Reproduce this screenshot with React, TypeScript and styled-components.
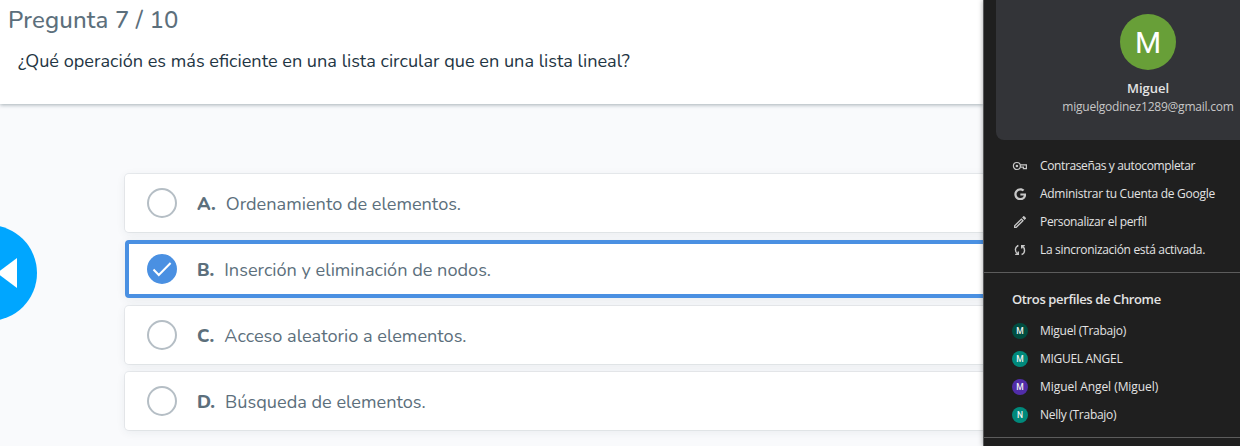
import React from "react";
import styled, { createGlobalStyle } from "styled-components";
import { MdOutlineEdit } from "react-icons/md";
import { FaGoogle } from "react-icons/fa";

const GlobalStyle = createGlobalStyle`
  * { box-sizing: border-box; }
  body { margin: 0; background: #f9fafc; overflow: hidden; }
`;

const Screen = styled.div`
  display: flex;
  width: 1240px;
  height: 446px;
  overflow: hidden;
  background: #f9fafc;
`;

const Quiz = styled.main`
  flex: 0 0 983px;
  min-width: 0;
  height: 100%;
  overflow: hidden;
  font-family: Nunito, Lato, sans-serif;
  color: #5c6f7c;
`;

const Header = styled.header`
  height: 104px;
  padding: 3px 8px 0;
  background: #fff;
  box-shadow: 0 1px 4px rgba(38, 62, 76, 0.4);
`;

const Progress = styled.h1`
  margin: 0;
  font-size: 24px;
  font-weight: 500;
  line-height: 34px;
  letter-spacing: 0.15px;
`;

const Question = styled.p`
  margin: 12px 0 0 10px;
  font-size: 18.15px;
  line-height: 24px;
  color: #1f3644;
`;

const Body = styled.div`
  display: flex;
  align-items: flex-start;
  padding-top: 70px;
`;

const PrevButton = styled.button`
  flex: none;
  display: flex;
  align-items: center;
  width: 96px;
  height: 96px;
  margin: 51px 88px 0 -59px;
  padding: 0 0 0 58px;
  border: 0;
  border-radius: 50%;
  background: #00a6ff;
`;

const Answers = styled.div`
  flex: none;
  display: flex;
  flex-direction: column;
  gap: 8px;
  width: 990px;
`;

const Answer = styled.div<{ $selected?: boolean }>`
  display: flex;
  align-items: center;
  height: 58px;
  padding-left: ${(p) => (p.$selected ? 18 : 22)}px;
  border-radius: 4px;
  background: #fff;
  border: ${(p) => (p.$selected ? "4px solid #4a90e2" : "0")};
  box-shadow: ${(p) => (p.$selected ? "" : "0 0 0 1px rgba(38, 62, 76, 0.07), ")}0 2px 10px rgba(38, 62, 76, 0.08);
  font-size: 18.15px;
  line-height: 24px;
`;

const Radio = styled.span<{ $selected?: boolean }>`
  display: flex;
  align-items: center;
  justify-content: center;
  width: 30px;
  height: 30px;
  border-radius: 50%;
  border: ${(p) => (p.$selected ? "0" : "2px solid #b5bec5")};
  background: ${(p) => (p.$selected ? "#4a90e2" : "#fff")};
`;

const Letter = styled.b`
  margin: 2px 10px 0 20px;
  font-weight: 800;
`;

const AnswerText = styled.span`
  margin-top: 2px;
`;

const Panel = styled.aside`
  position: relative;
  flex: 1;
  min-width: 0;
  height: 446px;
  overflow: hidden;
  border-left: 1px solid #58595b;
  background: #1f1f1f;
  box-shadow: 0 0 5px rgba(0, 0, 0, 0.35);
  font-family: "Open Sans", sans-serif;
  font-size: 12px;
  color: #e3e3e3;
`;

const ProfileCard = styled.div`
  display: flex;
  flex-direction: column;
  align-items: center;
  width: 304px;
  height: 140px;
  margin-left: 12px;
  padding-top: 14px;
  border-radius: 0 0 8px 8px;
  background: #333438;
`;

const Avatar = styled.span`
  display: flex;
  align-items: center;
  justify-content: center;
  width: 56px;
  height: 56px;
  padding-top: 1px;
  border-radius: 50%;
  background: #689f38;
  color: #fff;
  font: 400 30px/55px Roboto, sans-serif;
`;

const Name = styled.strong`
  margin-top: 9px;
  font-size: 13px;
  line-height: 18px;
  font-weight: 600;
`;

const Email = styled.span`
  margin-top: 1px;
  line-height: 18px;
  letter-spacing: -0.22px;
  color: #c7c7c7;
`;

const List = styled.ul`
  margin: 0;
  padding: 12px 0 8px 28px;
  list-style: none;
  border-bottom: 1px solid #5c5c5c;
`;

const ProfileList = styled(List)`
  padding: 8px 0;
  padding-left: 28px;
`;

const Item = styled.li<{ $spacing: number }>`
  display: flex;
  align-items: center;
  gap: 12px;
  height: 28px;
  white-space: nowrap;
  letter-spacing: ${(p) => p.$spacing}px;
`;

const ItemText = styled.span`
  padding-bottom: 2px;
`;

const IconSlot = styled.span`
  display: flex;
  align-items: center;
  justify-content: center;
  width: 16px;
  height: 16px;
  color: #c7c7c7;
`;

const Heading = styled.h2`
  margin: 16px 0 0 28px;
  font-size: 13px;
  line-height: 20px;
  font-weight: 600;
  letter-spacing: -0.38px;
`;

const Badge = styled.span<{ $color: string }>`
  width: 16px;
  height: 16px;
  border-radius: 50%;
  background: ${(p) => p.$color};
  color: #f1f1f1;
  font: 500 8.5px/16px Roboto, sans-serif;
  letter-spacing: 0;
  text-align: center;
`;

const KeyIcon = () => (
  <svg width="16" height="16" viewBox="0 0 16 16" fill="none" stroke="currentColor" strokeWidth="1.2">
    <circle cx="4.9" cy="8" r="3.5" />
    <circle cx="4.9" cy="8" r="1.3" fill="currentColor" stroke="none" />
    <path d="M8.3 6.8H14.4V10.6H11.4V9.2H8.3" />
  </svg>
);

const SyncIcon = () => (
  <svg width="12" height="12" viewBox="0 0 12 12" fill="none" stroke="currentColor" strokeWidth="1.4">
    <path d="M4.4 1.5C0.6 2.8 0.6 7.6 3.6 9.9M1.2 10.4H4.3V7.4" />
    <path d="M7.6 10.5C11.4 9.2 11.4 4.4 8.4 2.1M10.8 1.6H7.7V4.6" />
  </svg>
);

const answers = [
  { letter: "A", text: "Ordenamiento de elementos." },
  { letter: "B", text: "Inserción y eliminación de nodos.", selected: true },
  { letter: "C", text: "Acceso aleatorio a elementos." },
  { letter: "D", text: "Búsqueda de elementos." },
];

const actions = [
  { icon: <KeyIcon />, text: "Contraseñas y autocompletar", spacing: -0.37 },
  { icon: <FaGoogle size={12.5} />, text: "Administrar tu Cuenta de Google", spacing: -0.28 },
  { icon: <MdOutlineEdit size={16} />, text: "Personalizar el perfil", spacing: -0.34 },
  { icon: <SyncIcon />, text: "La sincronización está activada.", spacing: -0.32 },
];

const profiles = [
  { color: "#004d40", text: "Miguel (Trabajo)", spacing: -0.26 },
  { color: "#00897b", text: "MIGUEL ANGEL", spacing: -0.3 },
  { color: "#512da8", text: "Miguel Angel (Miguel)", spacing: -0.06 },
  { color: "#00897b", text: "Nelly (Trabajo)", spacing: -0.28 },
];

export default function App() {
  return (
    <Screen>
      <GlobalStyle />
      <Quiz>
        <Header>
          <Progress>Pregunta 7 / 10</Progress>
          <Question>¿Qué operación es más eficiente en una lista circular que en una lista lineal?</Question>
        </Header>
        <Body>
          <PrevButton aria-label="Anterior">
            <svg width="18" height="30" viewBox="0 0 18 30">
              <path d="M18 0V30L-2 15Z" fill="#fff" />
            </svg>
          </PrevButton>
          <Answers>
            {answers.map((a) => (
              <Answer key={a.letter} $selected={a.selected}>
                <Radio $selected={a.selected}>
                  {a.selected && (
                    <svg width="20" height="16" viewBox="0 0 20 16" fill="none" stroke="#fff" strokeWidth="2">
                      <path d="M1.5 8.5L6.8 14L18.6 2" />
                    </svg>
                  )}
                </Radio>
                <Letter>{a.letter}.</Letter>
                <AnswerText>{a.text}</AnswerText>
              </Answer>
            ))}
          </Answers>
        </Body>
      </Quiz>
      <Panel>
        <ProfileCard>
          <Avatar>M</Avatar>
          <Name>Miguel</Name>
          <Email>miguelgodinez1289@gmail.com</Email>
        </ProfileCard>
        <List>
          {actions.map((a) => (
            <Item key={a.text} $spacing={a.spacing}>
              <IconSlot>{a.icon}</IconSlot>
              <ItemText>{a.text}</ItemText>
            </Item>
          ))}
        </List>
        <Heading>Otros perfiles de Chrome</Heading>
        <ProfileList>
          {profiles.map((p) => (
            <Item key={p.text} $spacing={p.spacing}>
              <Badge $color={p.color}>{p.text[0]}</Badge>
              <ItemText>{p.text}</ItemText>
            </Item>
          ))}
        </ProfileList>
      </Panel>
    </Screen>
  );
}
